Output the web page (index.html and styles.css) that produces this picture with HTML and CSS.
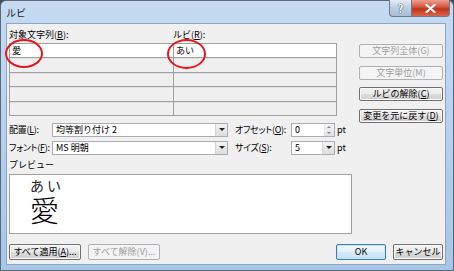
FILE: index.html
```html
<!DOCTYPE html>
<html lang="ja">
<head>
  <meta charset="UTF-8">
  <title>ルビ</title>
  <link rel="stylesheet" href="styles.css">
</head>
<body>
  <div class="window">

    <!-- BARRA DE TITULO -->
    <div class="titlebar">
      <span class="title">ルビ</span>
      <div class="caption-buttons">
        <span class="cap-btn help">?</span>
        <span class="cap-btn close">
          <svg width="11" height="9" viewBox="0 0 11 9"><path d="M1.5 1 L9.5 8 M9.5 1 L1.5 8" stroke="#fff" stroke-width="2.2" stroke-linecap="round"/></svg>
        </span>
      </div>
    </div>

    <div class="client">

      <!-- TABLA DE RUBI + BOTONES -->
      <div class="top">
        <div class="table-zone">
          <div class="table-labels">
            <span class="col-base">対象文字列(<u>B</u>):</span>
            <span>ルビ(<u>R</u>):</span>
          </div>
          <div class="ruby-table">
            <div class="row current"><span class="cell col-base">愛</span><span class="cell">あい</span></div>
            <div class="row"><span class="cell col-base"></span><span class="cell"></span></div>
            <div class="row"><span class="cell col-base"></span><span class="cell"></span></div>
            <div class="row"><span class="cell col-base"></span><span class="cell"></span></div>
            <div class="row"><span class="cell col-base"></span><span class="cell"></span></div>
          </div>
        </div>
        <div class="side-buttons">
          <button class="btn disabled">文字列全体(G)</button>
          <button class="btn disabled">文字単位(M)</button>
          <button class="btn">ルビの解除(<u>C</u>)</button>
          <button class="btn">変更を元に戻す(<u>D</u>)</button>
        </div>
      </div>

      <!-- OPCIONES -->
      <div class="options">
        <span class="opt-label">配置(<u>L</u>):</span>
        <div class="combo wide"><span class="combo-text">均等割り付け 2</span><span class="drop"></span></div>
        <span class="opt-label second">オフセット(<u>O</u>):</span>
        <div class="combo small"><span class="combo-text">0</span><span class="spin"><i class="up"></i><i class="down"></i></span></div>
        <span class="unit">pt</span>

        <span class="opt-label">フォント(<u>F</u>):</span>
        <div class="combo wide"><span class="combo-text">MS 明朝</span><span class="drop"></span></div>
        <span class="opt-label second">サイズ(<u>S</u>):</span>
        <div class="combo small"><span class="combo-text">5</span><span class="drop"></span></div>
        <span class="unit">pt</span>
      </div>

      <!-- PREVISUALIZACION -->
      <div class="preview-label">プレビュー</div>
      <div class="preview">
        <div class="ruby-sample">
          <span class="rt"><span>あ</span><span>い</span></span>
          <span class="rb">愛</span>
        </div>
      </div>

      <!-- BOTONES -->
      <div class="footer">
        <button class="btn foot">すべて適用(<u>A</u>)...</button>
        <button class="btn foot disabled">すべて解除(V)...</button>
        <span class="spacer"></span>
        <button class="btn foot default">OK</button>
        <button class="btn foot">キャンセル</button>
      </div>
    </div>

    <!-- marcas rojas -->
    <span class="mark mark-base"></span>
    <span class="mark mark-ruby"></span>
  </div>
</body>
</html>
```

FILE: styles.css
```css
* {
  box-sizing: border-box;
  font-family: "Noto Sans CJK JP", "Liberation Sans", sans-serif;
}

body {
  margin: 0;
  background: #3d4a57;
}

.window {
  position: relative;
  width: 454px;
  height: 271px;
  padding: 0 7px 5px 5px;
  background: linear-gradient(to bottom, #c6dbf2 0%, #b9d2ee 40%, #a8c6e8 100%);
  border: 1px solid #5a6a7c;
  border-radius: 6px 6px 0 0;
  display: flex;
  flex-direction: column;
}

/* TITULO */
.titlebar {
  height: 22px;
  display: flex;
  justify-content: space-between;
  align-items: flex-start;
}
  .title {
    font-size: 10px;
    line-height: 12px;
    margin-top: 6px;
    color: #1e1e1e;
  }
  .caption-buttons {
    display: flex;
    margin-right: -4px;
    margin-top: -1px;
  }
    .cap-btn {
      height: 17px;
      display: flex;
      align-items: center;
      justify-content: center;
      border: 1px solid #6b7b8c;
      border-top: none;
    }
    .help {
      width: 22px;
      border-radius: 0 0 0 4px;
      border-right: none;
      background: linear-gradient(to bottom, #e4edf6, #b9cde2 50%, #a9bfd8);
      color: #fff;
      font-size: 11px;
      font-weight: bold;
      text-shadow: 0 0 1px #37485a, 0 0 1px #37485a;
    }
    .close {
      width: 39px;
      border-radius: 0 0 4px 0;
      background: linear-gradient(to bottom, #eba190, #d2553b 45%, #c23418 55%, #d9664a);
    }

.client {
  flex: 1;
  background: #f0f0f0;
  border: 1px solid #8da5c2;
  padding: 0 2px 0 2px;
  font-size: 9px;
  color: #000;
  white-space: nowrap;
}

u { text-decoration: underline; }

/* TABLA */
.top {
  display: flex;
  justify-content: space-between;
  align-items: flex-start;
}
  .table-labels {
    display: flex;
    height: 12px;
    line-height: 12px;
    margin-top: 5px;
    margin-bottom: 2px;
  }
  .col-base {
    width: 164px;
  }
  .ruby-table {
    width: 328px;
    height: 73px;
    border: 1px solid #a0a0a0;
    display: grid;
    grid-template-rows: repeat(5, 1fr);
    background: #a0a0a0;
    row-gap: 1px;
  }
    .row {
      display: flex;
      background: #efefef;
      box-shadow: inset 0 1px 0 #e2e2e2;
    }
    .row.current { background: #fff; box-shadow: none; }
    .cell {
      line-height: 13px;
      padding-left: 2px;
      flex: 1;
    }
    .cell.col-base {
      flex: none;
      border-right: 1px solid #a0a0a0;
    }

  .side-buttons {
    width: 84px;
    margin-top: 20px;
    display: flex;
    flex-direction: column;
    gap: 7.5px;
  }

.btn {
  height: 14px;
  padding: 0;
  font-size: 9px;
  line-height: 12px;
  color: #000;
  white-space: nowrap;
  border: 1px solid #707070;
  border-radius: 2px;
  background: linear-gradient(to bottom, #f2f2f2 0%, #ebebeb 50%, #dddddd 51%, #cfcfcf 100%);
  box-shadow: inset 0 0 0 1px #fbfbfb;
}
.btn.disabled {
  color: #9c9c9c;
  border-color: #adb2b5;
  background: #f4f4f4;
  box-shadow: none;
}

/* OPCIONES */
.options {
  margin-top: 0;
  display: grid;
  grid-template-columns: 43px 176px 63px 44px auto;
  grid-auto-rows: 14px;
  row-gap: 4px;
  align-items: center;
}
  .opt-label {
    line-height: 12px;
    font-feature-settings: "palt";
    letter-spacing: -0.3px;
  }
  .opt-label.second { padding-left: 7px; }
  .combo {
    height: 14px;
    border: 1px solid #abadb3;
    background: #fff;
    display: flex;
    align-items: stretch;
  }
    .combo-text {
      flex: 1;
      line-height: 12px;
      padding-left: 3px;
    }
    .drop {
      width: 12px;
      border-left: 1px solid #d4d4d4;
      background: linear-gradient(to bottom, #f4f4f4, #dcdcdc);
      display: flex;
      align-items: center;
      justify-content: center;
    }
    .drop::after {
      content: "";
      border-left: 3px solid transparent;
      border-right: 3px solid transparent;
      border-top: 3px solid #222;
    }
    .spin {
      width: 10px;
      display: flex;
      flex-direction: column;
      background: linear-gradient(to bottom, #f4f4f4, #e0e0e0);
    }
      .spin i {
        flex: 1;
        display: flex;
        align-items: center;
        justify-content: center;
      }
      .spin .up::after {
        content: "";
        border-left: 2px solid transparent;
        border-right: 2px solid transparent;
        border-bottom: 2px solid #6c8aa8;
      }
      .spin .down::after {
        content: "";
        border-left: 2px solid transparent;
        border-right: 2px solid transparent;
        border-top: 2px solid #6c8aa8;
      }
  .unit { padding-left: 2px; line-height: 12px; }

/* PREVIEW */
.preview-label {
  margin-top: 4px;
  line-height: 12px;
  height: 12px;
}
.preview {
  width: 343px;
  height: 60px;
  margin-top: 3px;
  background: #fff;
  border: 1px solid #a0a0a0;
  padding: 2px 0 0 20px;
}
  .ruby-sample {
    display: inline-flex;
    flex-direction: column;
    width: 31px;
  }
    .rt {
      display: flex;
      justify-content: space-between;
      font-size: 14px;
      line-height: 16px;
      color: #222;
    }
    .rb {
      font-size: 29px;
      line-height: 32px;
      font-weight: 300;
    }

/* PIE */
.footer {
  margin-top: 10px;
  display: flex;
  gap: 7px;
}
  .btn.foot {
    width: 72px;
    height: 16px;
    line-height: 14px;
  }
  .spacer { flex: 1; }
  .btn.foot.default,
  .btn.foot:last-child { width: 50px; }
  .btn.default {
    border-color: #3c7fb1;
    box-shadow: inset 0 0 0 1px #c4e5f6;
    background: linear-gradient(to bottom, #f1f8fd, #e2f0fa 50%, #d2e9f8 51%, #c8e3f7);
  }

.mark {
  position: absolute;
  border: 2.5px solid #e8141e;
  border-radius: 50%;
}
.mark-base { left: 4px; top: 38px; width: 38px; height: 29px; }
.mark-ruby { left: 166px; top: 38px; width: 39px; height: 30px; }
```
